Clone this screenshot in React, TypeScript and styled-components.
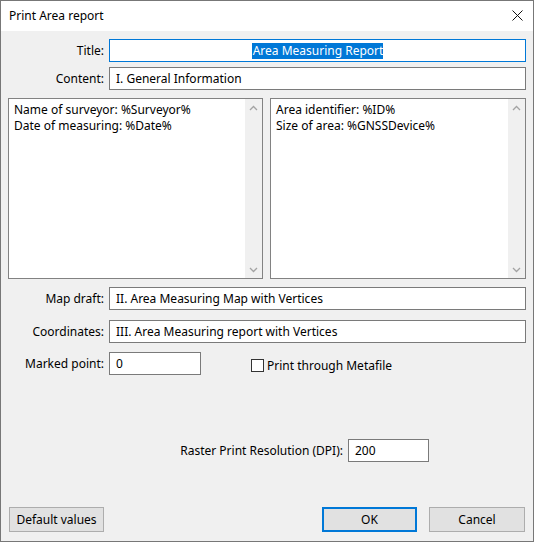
import React from "react";
import styled, { createGlobalStyle } from "styled-components";

const GlobalStyle = createGlobalStyle`
    html, body {
        margin: 0;
        padding: 0;
        background: #f0f0f0;
    }
    * {
        box-sizing: border-box;
    }
`;

const Window = styled.div`
    width: 534px;
    height: 542px;
    display: flex;
    flex-direction: column;
    border: 1px solid #777777;
    background: #f0f0f0;
    font-family: "Segoe UI", "Noto Sans", "Liberation Sans", sans-serif;
    font-size: 12px;
    color: #000;
`;

const TitleBar = styled.div`
    height: 30px;
    display: flex;
    align-items: center;
    justify-content: space-between;
    background: #ffffff;
    padding: 0 10px 0 8px;
`;

const Caption = styled.span`
    font-size: 12px;
    padding-bottom: 1px;
`;

const CloseGlyph = styled.svg`
    width: 11px;
    height: 11px;
    margin-bottom: 1px;
`;

const Body = styled.div`
    flex: 1;
    display: flex;
    flex-direction: column;
    padding: 0 7px 9px 7px;
`;

const FieldRow = styled.div<{ $top: number }>`
    display: flex;
    align-items: center;
    margin-top: ${(p) => p.$top}px;
`;

// label cell: fixed width, text flush right, 5px before the box
const Label = styled.span<{ $width?: number }>`
    width: ${(p) => p.$width ?? 101}px;
    flex-shrink: 0;
    text-align: right;
    padding-right: 5px;
`;

const TextBox = styled.div<{ $focused?: boolean; $width?: number }>`
    height: 23px;
    ${(p) => (p.$width ? `width: ${p.$width}px;` : "flex: 1;")}
    display: flex;
    align-items: center;
    justify-content: ${(p) => (p.$focused ? "center" : "flex-start")};
    background: #ffffff;
    border: 1px solid ${(p) => (p.$focused ? "#0078d7" : "#7a7a7a")};
    padding: 0 6px;
    white-space: nowrap;
    overflow: hidden;
`;

const Selection = styled.span`
    background: #0078d7;
    color: #ffffff;
    line-height: 16px;
    padding: 0 0 0 1px;
`;

const MemoGrid = styled.div`
    margin-top: 8px;
    display: grid;
    grid-template-columns: 255px 1fr;
    gap: 7px;
    height: 181px;
`;

const Memo = styled.div`
    display: flex;
    background: #ffffff;
    border: 1px solid #828282;
`;

const MemoText = styled.div`
    flex: 1;
    padding: 3px 5px;
    line-height: 16px;
`;

const ScrollBar = styled.div`
    width: 17px;
    display: flex;
    flex-direction: column;
    justify-content: space-between;
    align-items: center;
    background: #f0f0f0;
    padding: 6px 0 5px;
`;

const Arrow = styled.svg`
    width: 9px;
    height: 6px;
`;

const CheckLabel = styled.label`
    display: flex;
    align-items: center;
    gap: 3px;
    margin-left: 50px;
    margin-top: 3px;
`;

const CheckBox = styled.span`
    width: 13px;
    height: 13px;
    border: 1px solid #333333;
    background: #ffffff;
`;

const ButtonBar = styled.div`
    margin-top: auto;
    display: flex;
    align-items: center;
    padding-left: 1px;
    padding-right: 1px;
`;

const Button = styled.button<{ $default?: boolean; $gap?: number; $width?: number }>`
    width: ${(p) => p.$width ?? 96}px;
    height: 25px;
    margin-left: ${(p) => p.$gap ?? 0}px;
    font: inherit;
    color: #000;
    background: #e1e1e1;
    border: ${(p) => (p.$default ? "2px solid #0078d7" : "1px solid #adadad")};
    padding: 0;
`;

const Spacer = styled.div`
    flex: 1;
`;

const UpArrow = () => (
    <Arrow viewBox="0 0 9 6">
        <path d="M1 5 L4.5 1.5 L8 5" fill="none" stroke="#a3a3a3" strokeWidth="1.3" />
    </Arrow>
);

const DownArrow = () => (
    <Arrow viewBox="0 0 9 6">
        <path d="M1 1 L4.5 4.5 L8 1" fill="none" stroke="#a3a3a3" strokeWidth="1.3" />
    </Arrow>
);

const MemoBox: React.FC<{ lines: string[] }> = ({ lines }) => (
    <Memo>
        <MemoText>
            {lines.map((l) => (
                <div key={l}>{l}</div>
            ))}
        </MemoText>
        <ScrollBar>
            <UpArrow />
            <DownArrow />
        </ScrollBar>
    </Memo>
);

const App: React.FC = () => {
    return (
        <>
            <GlobalStyle />
            <Window>
                <TitleBar>
                    <Caption>Print Area report</Caption>
                    <CloseGlyph viewBox="0 0 11 11">
                        <path d="M0.5 0.5 L10.5 10.5 M10.5 0.5 L0.5 10.5" stroke="#111" strokeWidth="1" />
                    </CloseGlyph>
                </TitleBar>
                <Body>
                    <FieldRow $top={8}>
                        <Label>Title:</Label>
                        <TextBox $focused>
                            <Selection>Area Measuring Report</Selection>
                        </TextBox>
                    </FieldRow>
                    <FieldRow $top={5}>
                        <Label>Content:</Label>
                        <TextBox>I. General Information</TextBox>
                    </FieldRow>

                    <MemoGrid>
                        <MemoBox lines={["Name of surveyor: %Surveyor%", "Date of measuring: %Date%"]} />
                        <MemoBox lines={["Area identifier: %ID%", "Size of area: %GNSSDevice%"]} />
                    </MemoGrid>

                    <FieldRow $top={8}>
                        <Label>Map draft:</Label>
                        <TextBox>II. Area Measuring Map with Vertices</TextBox>
                    </FieldRow>
                    <FieldRow $top={10}>
                        <Label>Coordinates:</Label>
                        <TextBox>III. Area Measuring report with Vertices</TextBox>
                    </FieldRow>
                    <FieldRow $top={9}>
                        <Label>Marked point:</Label>
                        <TextBox $width={92}>0</TextBox>
                        <CheckLabel>
                            <CheckBox />
                            Print through Metafile
                        </CheckLabel>
                    </FieldRow>

                    <FieldRow $top={64}>
                        <Label $width={340}>Raster Print Resolution (DPI):</Label>
                        <TextBox $width={81}>200</TextBox>
                    </FieldRow>

                    <ButtonBar>
                        <Button $width={95}>Default values</Button>
                        <Spacer />
                        <Button $default $width={95}>OK</Button>
                        <Button $gap={12}>Cancel</Button>
                    </ButtonBar>
                </Body>
            </Window>
        </>
    );
};

export default App;
